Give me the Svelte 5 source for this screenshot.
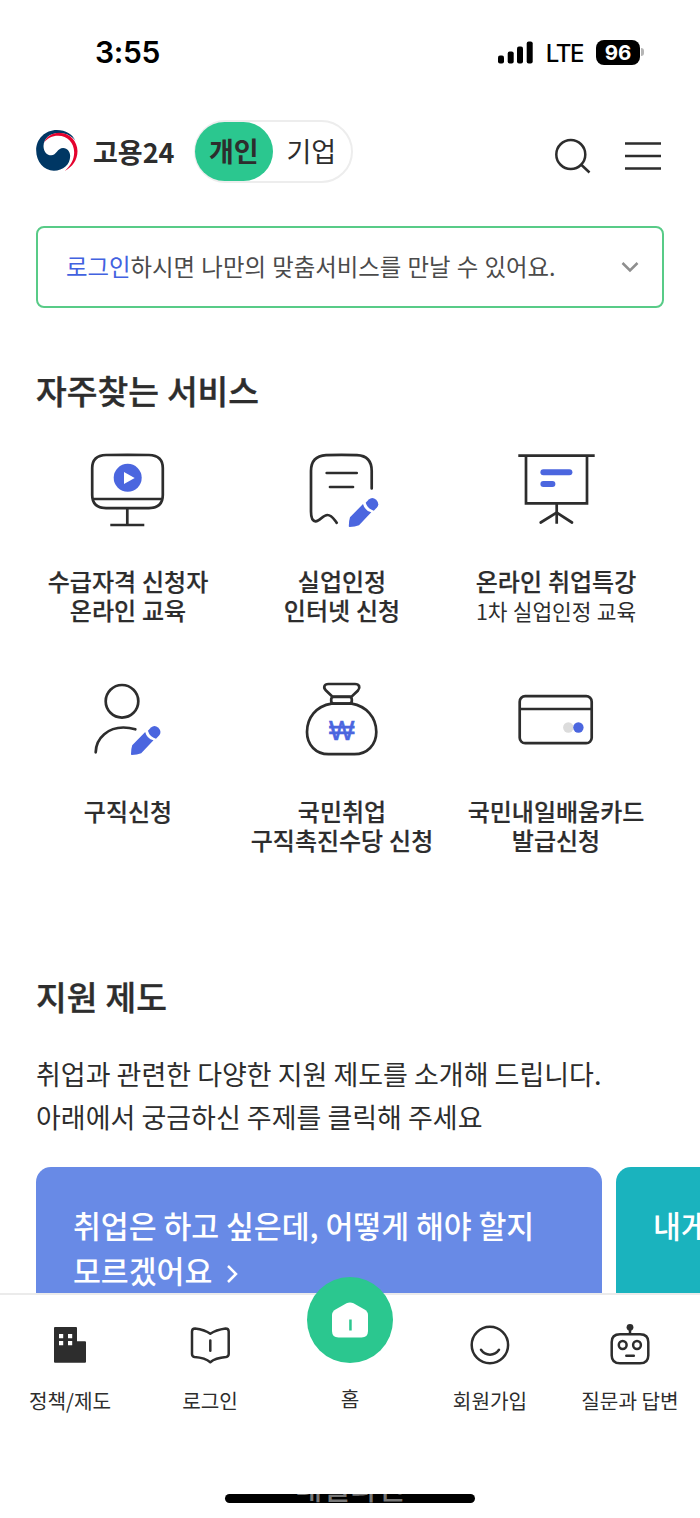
<script lang="ts">
  interface Service {
    icon: string;
    lines: string[];
    sub?: string;
  }

  const services: Service[] = [
    { icon: "monitor", lines: ["수급자격 신청자", "온라인 교육"] },
    { icon: "receipt", lines: ["실업인정", "인터넷 신청"] },
    { icon: "board", lines: ["온라인 취업특강"], sub: "1차 실업인정 교육" },
    { icon: "person", lines: ["구직신청"] },
    { icon: "bag", lines: ["국민취업", "구직촉진수당 신청"] },
    { icon: "card", lines: ["국민내일배움카드", "발급신청"] },
  ];

  const tabs = [
    { icon: "building", label: "정책/제도" },
    { icon: "book", label: "로그인" },
    { icon: "home", label: "홈" },
    { icon: "smile", label: "회원가입" },
    { icon: "robot", label: "질문과 답변" },
  ];

  let mode = $state("개인");
</script>

{#snippet pencil()}
  <path
    class="blue"
    d="M48 67.3 61 54q1.6 6.6 8.3 8.3L57 75.3q-4 1.7-9.4 1.7-.9 0-.8-1 0-5 1.2-8.7Z"
  />
  <path
    class="blue"
    d="M63.7 52.7 66.8 49.5Q70.3 46.3 74.2 49.8 78 54 74.9 57.5L71.8 60.7Q65.5 58.8 63.7 52.7Z"
  />
{/snippet}

<div class="screen">
  <div class="status">
    <span class="time">3:55</span>
    <div class="signals">
      <svg class="bars" width="35" height="23" viewBox="0 0 35 23">
        <rect x="0" y="14.5" width="6" height="8" rx="2" />
        <rect x="9.7" y="10.5" width="6" height="12" rx="2" />
        <rect x="19" y="5.5" width="6" height="17" rx="2" />
        <rect x="28.7" y="0.5" width="6" height="22" rx="2" />
      </svg>
      <span class="lte">LTE</span>
      <span class="battery">96</span>
      <span class="cap"></span>
    </div>
  </div>

  <header>
    <svg class="logo" width="42" height="41" viewBox="109 330 125 123">
      <path
        fill="#003764"
        d="M162 452C132 452 109 426 109 391 109 357 136 330 171 330 198 330 218 343 227 362 214 346 196 339 178 339 150 339 132 355 131 378 131 396 142 406 154 406 170 406 172 384 190 384 203 384 211 396 211 408 211 434 190 452 162 452Z"
      />
      <path
        fill="#e4032e"
        d="M133 368C139 349 158 338 178 338 210 338 233 364 233 393 233 420 218 440 195 453 214 436 223 418 223 397 223 368 203 347 175 347 157 347 142 354 133 368Z"
      />
    </svg>
    <span class="brand">고용24</span>
    <div class="toggle">
      {#each ["개인", "기업"] as name}
        <button class:active={mode === name} onclick={() => (mode = name)}>{name}</button>
      {/each}
    </div>
    <svg class="tools" width="108" height="40" viewBox="0 0 108 40">
      <circle cx="17.8" cy="18.5" r="14.5" />
      <path d="m28 28.500 8.500 8M72 7.500h36M72 20h36M72 32.500h36" />
    </svg>
  </header>

  <main>
    <div class="login">
      <p><a href="#login">로그인</a>하시면 나만의 맞춤서비스를 만날 수 있어요.</p>
      <svg width="18" height="12" viewBox="0 0 18 12"><path d="m1.500 2 7.500 7.500L16.500 2" /></svg>
    </div>

    <h2>자주찾는 서비스</h2>
    <div class="services">
      {#each services as service}
        <div class="service">
          <svg width="80" height="80" viewBox="0 0 80 80">
            {#if service.icon === "monitor"}
              <path d="M18 5Q39.500 4.600 61 5 74.800 5.500 74.800 18V45Q74.800 57.800 61 58.200H18Q4.200 57.800 4.200 45V18Q4.200 5.500 18 5Z" />
              <path d="M4.500 49h70M39.300 58v17M22.300 75h34" />
              <circle class="blue" cx="39.700" cy="27.800" r="14" />
              <path class="white" d="m36 22 10.700 6L36 34Z" />
            {:else if service.icon === "receipt"}
              <path
                stroke-linecap="round"
                d="M69.700 38.500V21Q69.700 5.800 55 5.100 39.500 4.700 24 5.100 9 6 9 21V61.500C9 68 10 71 13.500 71.300 18 71.500 20.500 65 25.500 65 30 65 32 69.500 34.700 72.800M24.700 23h30M28 37h23"
              />
              {@render pencil()}
            {:else if service.icon === "board"}
              <path d="M2.300 5.700h76.400M10 5.700v47.600h61V5.700M40.700 53.300v20.400" />
              <path stroke-linecap="round" d="m24.700 72.500 16-9.800 15.300 9.800" />
              <rect class="blue" x="24.400" y="19.200" width="32" height="6" rx="3" />
              <rect class="blue" x="24.400" y="31" width="15" height="6" rx="3" />
            {:else if service.icon === "person"}
              <circle cx="34" cy="21.300" r="16.300" />
              <path stroke-linecap="round" d="M7.700 72.300C8 57 21 47.500 35.300 47.500 40 47.500 44 48.300 47.300 49.300" />
              <g transform="translate(-3.800 -2)">{@render pencil()}</g>
            {:else if service.icon === "bag"}
              <path d="M29.500 23.600C14 26 5 38 5 52 5 65 14 74.200 26.500 74.200H52.500C65 74.200 74.300 65 74.300 52 74.300 37 64 26 49.700 23.600Z" />
              <path d="M30.500 16.700 24 10.500C21 7.500 22 4 26.500 4H53C57.500 4 58.500 7.500 56 10.500L49.500 16.700Z" />
              <rect x="29.200" y="17" width="20.600" height="6.500" rx="2.500" />
              <text x="39.700" y="59.600" text-anchor="middle">₩</text>
            {:else}
              <rect x="3.700" y="16.200" width="72" height="47" rx="5.500" />
              <path d="M3.700 29h72" />
              <circle class="grey" cx="52.300" cy="47.500" r="5.200" />
              <circle class="blue" cx="62.400" cy="47.500" r="5.200" />
            {/if}
          </svg>
          <div class="caption">
            {#each service.lines as line}
              <strong>{line}</strong>
            {/each}
            {#if service.sub}
              <span>{service.sub}</span>
            {/if}
          </div>
        </div>
      {/each}
    </div>

    <h2>지원 제도</h2>
    <p class="intro">
      취업과 관련한 다양한 지원 제도를 소개해 드립니다.<br />아래에서 궁금하신 주제를 클릭해 주세요
    </p>
    <div class="cards">
      <div class="topic">
        취업은 하고 싶은데, 어떻게 해야 할지<br />모르겠어요
        <svg width="12" height="20" viewBox="0 0 12 20"><path d="m2 2 8 8-8 8" /></svg>
      </div>
      <div class="topic teal">내게 맞는 일자리</div>
    </div>
  </main>

  <nav>
    {#each tabs as tab}
      <div class="tab" class:center={tab.icon === "home"}>
        {#if tab.icon === "home"}
          <div class="home">
            <svg width="36" height="36" viewBox="0 0 36 36">
              <path
                class="house"
                d="M14.500 1.300Q18 -.5 21.500 1.300L32.500 7.500Q36 9.500 36 13V29Q36 35.500 29.500 35.500H6.500Q0 35.500 0 29V13Q0 9.500 3.500 7.500Z"
              />
              <rect class="door" x="17.200" y="17.500" width="2.500" height="11" />
            </svg>
          </div>
        {:else}
          <svg width="40" height="40" viewBox="0 0 40 40">
            {#if tab.icon === "building"}
              <path
                class="solid"
                fill-rule="evenodd"
                d="M5 2H26Q27 2 27 3V16.300H35Q36 16.300 36 17.300V36.700Q36 37.700 35 37.700H5Q4 37.700 4 36.700V3Q4 2 5 2ZM9 9v4.200h4.200V9ZM18 9v4.200h4.200V9ZM9 16v4.200h4.200V16ZM18 16v4.200h4.200V16Z"
              />
            {:else if tab.icon === "book"}
              <path
                stroke-linejoin="round"
                d="M20.300 8.800C16 5.500 11 4.300 5 3.500Q2 3.500 2 6.500V29Q2 31.500 4.500 32C11 32.500 16 33.500 20.300 37.200 24.500 33.500 30 32.500 36 32Q38.700 31.500 38.700 29V6.500Q38.700 3.500 35.500 3.500C30 4.300 25 5.500 20.300 8.800Z"
              />
              <path stroke-linecap="round" d="M20.300 15.500v10.300" />
            {:else if tab.icon === "smile"}
              <circle cx="19.900" cy="20" r="18.200" />
              <path stroke-linecap="round" d="M11 24.800C15.500 31.300 24.500 31.300 29 24.800" />
            {:else}
              <path d="M10 9.200H30Q38.300 9.200 38.300 17V30.500Q38.300 38.300 30 38.300H10Q1.700 38.300 1.700 30.500V17Q1.700 9.200 10 9.200ZM20 2v7" />
              <circle class="solid" cx="20" cy="2.300" r="3.400" />
              <circle cx="12.700" cy="20" r="3.900" />
              <circle cx="27" cy="20" r="3.900" />
              <path stroke-linecap="round" d="M16.300 30.700h7.500" />
            {/if}
          </svg>
        {/if}
        <span>{tab.label}</span>
      </div>
    {/each}
  </nav>

  <div class="indicator"><span>내일라인</span></div>
</div>

<style>
  :global(body) {
    margin: 0;
    background: #fff;
  }

  .screen {
    width: 700px;
    height: 1518px;
    display: flex;
    flex-direction: column;
    overflow: hidden;
    background: #fff;
    color: #2d2d2d;
    font-family: "Noto Sans CJK KR", sans-serif;
    word-break: keep-all;
  }

  .status {
    height: 104px;
    flex: none;
    display: flex;
    align-items: center;
    justify-content: space-between;
    box-sizing: border-box;
    padding: 0 56px 0 95px;
    color: #000;
    font-family: Inter, sans-serif;
  }

  .time {
    font-size: 30px;
    font-weight: 600;
    letter-spacing: -0.3px;
  }

  .signals {
    display: flex;
    align-items: center;
  }

  .lte {
    margin: 2px 13px 0 13px;
    font-size: 24px;
    font-weight: 500;
    letter-spacing: -1.4px;
  }

  .battery {
    width: 44px;
    height: 25px;
    border-radius: 8px;
    background: #000;
    color: #fff;
    font-size: 20.5px;
    font-weight: 700;
    line-height: 25px;
    text-align: center;
  }

  .cap {
    width: 3px;
    height: 8px;
    margin-left: 1px;
    border-radius: 0 4px 4px 0;
    background: #b5b5b5;
  }

  header {
    height: 96px;
    flex: none;
    display: flex;
    align-items: center;
    box-sizing: border-box;
    padding: 0 39px 2px 36px;
  }

  .logo {
    margin-bottom: 1px;
  }

  .brand {
    margin: 1px 0 0 15px;
    font-size: 27px;
    font-weight: 700;
  }

  .toggle {
    display: flex;
    box-sizing: border-box;
    width: 159px;
    height: 63px;
    margin-left: 19px;
    border: 2px solid #ededed;
    border-radius: 32px;
  }

  .toggle button {
    width: 79px;
    margin: 0 0 0 -1px;
    padding: 0;
    border: 0;
    border-radius: 30px;
    background: none;
    color: inherit;
    font: 400 27px/58px "Noto Sans CJK KR", sans-serif;
  }

  .toggle .active {
    background: #2bc78f;
    font-weight: 700;
  }

  .tools {
    margin: 10px 0 0 auto;
    fill: none;
    stroke: #2d2d2d;
    stroke-width: 2.5;
  }

  main {
    height: 1093px;
    flex: none;
    box-sizing: border-box;
    padding: 26px 0 0 36px;
    overflow: hidden;
  }

  .login {
    display: flex;
    align-items: center;
    justify-content: space-between;
    box-sizing: border-box;
    width: 628px;
    height: 82px;
    padding: 0 23px 2px 28px;
    border: 2px solid #58cb87;
    border-radius: 8px;
  }

  .login p {
    margin: 0;
    color: #4b4b4b;
    font-size: 23.4px;
    word-spacing: 1px;
  }

  .login a {
    color: #4262e0;
    text-decoration: none;
  }

  .login svg {
    margin-top: 2px;
    fill: none;
    stroke: #8e8e8e;
    stroke-width: 2.5;
  }

  h2 {
    margin: 0;
    font-size: 33.4px;
    font-weight: 500;
    line-height: 50px;
    word-spacing: 0.5px;
    -webkit-text-stroke: 0.4px currentColor;
  }

  .login + h2 {
    margin-top: 57px;
  }

  .services {
    display: grid;
    grid-template-columns: repeat(3, 214px);
    grid-auto-rows: 230px;
    margin: 35px 0 0 -15px;
  }

  .service {
    display: flex;
    flex-direction: column;
    align-items: center;
  }

  .service svg {
    fill: none;
    stroke: #2d2d2d;
    stroke-width: 2.7;
  }

  .service .blue,
  .service .grey,
  .service .white {
    fill: #4b66df;
    stroke: none;
  }

  .service .grey {
    fill: #dcdcdc;
  }

  .service .white {
    fill: #fff;
  }

  .service text {
    fill: #4b66df;
    stroke: #4b66df;
    stroke-width: 0.6;
    font-family: "Liberation Sans", sans-serif;
    font-size: 27px;
    font-weight: 400;
  }

  .caption {
    display: flex;
    flex-direction: column;
    align-items: center;
    margin-top: 36px;
    white-space: nowrap;
  }

  .caption strong,
  .caption span {
    font-size: 24px;
    font-weight: 500;
    line-height: 29px;
    word-spacing: 0.5px;
  }

  .caption strong {
    -webkit-text-stroke: 0.2px currentColor;
  }

  .caption span {
    font-size: 21.4px;
    font-weight: 400;
    line-height: 31px;
  }

  .services + h2 {
    margin-top: 61px;
  }

  .intro {
    margin: 31px 0 0;
    font-size: 27px;
    line-height: 43px;
  }

  .cards {
    display: flex;
    gap: 14px;
    margin-top: 29px;
  }

  .topic {
    width: 566px;
    height: 200px;
    flex: none;
    box-sizing: border-box;
    padding: 36px 0 0 37px;
    border-radius: 15px;
    background: #688ae6;
    color: #fff;
    font-size: 30.3px;
    font-weight: 500;
    line-height: 45px;
    white-space: nowrap;
  }

  .teal {
    background: #1ab3be;
  }

  .topic svg {
    margin: 0 0 -1px 7px;
    fill: none;
    stroke: #fff;
    stroke-width: 2.5;
  }

  nav {
    height: 199px;
    flex: none;
    display: flex;
    position: relative;
    border-top: 2px solid #ebebeb;
    background: #fff;
  }

  .tab {
    width: 140px;
    display: flex;
    flex-direction: column;
    align-items: center;
    padding-top: 30px;
    font-size: 20.2px;
    line-height: 30px;
  }

  .tab svg {
    overflow: visible;
    fill: none;
    stroke: #2d2d2d;
    stroke-width: 2.5;
  }

  .tab > span {
    margin-top: 21px;
  }

  .center {
    padding-top: 0;
  }

  .home {
    display: flex;
    align-items: center;
    justify-content: center;
    width: 86px;
    height: 86px;
    margin-top: -18px;
    border-radius: 50%;
    background: #2bc78f;
  }

  .tab .house {
    fill: #fff;
    stroke: none;
  }

  .tab .door {
    fill: #2bc78f;
    stroke: none;
  }

  .tab .solid {
    fill: #2d2d2d;
    stroke: none;
  }

  .indicator {
    display: flex;
    justify-content: center;
    align-items: flex-end;
    width: 250px;
    height: 9px;
    flex: none;
    margin: 0 auto;
    overflow: hidden;
    border-radius: 5px;
    background: #000;
    color: #777;
    font-size: 30px;
    font-weight: 500;
    line-height: 34px;
  }
</style>
